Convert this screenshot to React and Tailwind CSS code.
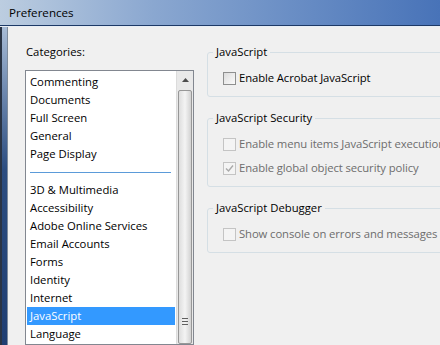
const categoriesTop = ['Commenting', 'Documents', 'Full Screen', 'General', 'Page Display']
const categoriesRest = [
  '3D & Multimedia',
  'Accessibility',
  'Adobe Online Services',
  'Email Accounts',
  'Forms',
  'Identity',
  'Internet',
  'JavaScript',
  'Language',
]

function CheckBox({ checked, disabled }) {
  return (
    <span
      className={
        'w-[13px] h-[13px] shrink-0 border flex items-center justify-center ' +
        (disabled
          ? 'border-[#c4c4c4] bg-[#f4f4f4]'
          : 'border-[#8e8f8f] bg-gradient-to-br from-[#dcdcdc] to-[#fbfbfb]')
      }
    >
      {checked && (
        <svg width="9" height="9" viewBox="0 0 9 9">
          <path d="M1 4.5 L3.5 7 L8 1.5" fill="none" stroke={disabled ? '#a9a9a9' : '#333'} strokeWidth="1.4" />
        </svg>
      )}
    </span>
  )
}

function Option({ label, checked, disabled }) {
  return (
    <div className="flex items-center gap-[3px] h-[16px] pl-[15px] whitespace-nowrap tracking-[-0.1px]">
      <CheckBox checked={checked} disabled={disabled} />
      <span className={disabled ? 'text-[#6d6d6d]' : 'text-black'}>{label}</span>
    </div>
  )
}

function Group({ title, children }) {
  return (
    <fieldset className="border border-[#d5dfe5] rounded-[3px] pb-[10px] flex flex-col gap-[8px]">
      <legend className="ml-[5px] px-[3px] leading-[16px] text-black">{title}</legend>
      <div className="flex flex-col gap-[8px] pt-[10px]">{children}</div>
    </fieldset>
  )
}

export default function App() {
  return (
    <div
      className="w-[440px] h-[345px] overflow-hidden flex flex-col bg-[#f0f0f0] text-[11.3px] leading-[16px]"
      style={{ fontFamily: '"Open Sans", "Noto Sans", sans-serif' }}
    >
      <div className="h-[26px] shrink-0 flex items-center pl-[9px] bg-gradient-to-r from-[#bccde0] via-[#8aa7d0] via-35% to-[#4873b8] border-b border-[#1d3966]">
        <span className="text-black text-[11.6px]">Preferences</span>
      </div>
      <div className="flex flex-1 min-h-0 border-t border-[#e8eef5]">
        <div className="w-[7px] shrink-0 bg-gradient-to-b from-[#a8bcd6] via-[#2c4d80] via-45% to-[#1f3e72] border-l-2 border-[#2a3444]" />
        <div className="w-px shrink-0 bg-[#7d8b9c]" />
        <div className="flex flex-1 min-w-0">
          <div className="w-[198px] shrink-0 pl-[17px] pt-[17px] flex flex-col">
            <div className="pl-[1px] text-black">Categories:</div>
            <div className="mt-[10px] w-[169px] flex-1 border border-[#828790] bg-white flex">
              <div className="flex-1 pt-[2px] pl-px pr-px flex flex-col overflow-hidden">
                {categoriesTop.map((c) => (
                  <div key={c} className="h-[18px] shrink-0 flex items-center pl-[3px] text-black whitespace-nowrap">
                    {c}
                  </div>
                ))}
                <div className="h-[18px] shrink-0 flex items-center px-[3px]">
                  <div className="h-px w-[141px] bg-[#5b9bd9]" />
                </div>
                {categoriesRest.map((c) => (
                  <div
                    key={c}
                    className={
                      'h-[18px] shrink-0 flex items-center pl-[3px] whitespace-nowrap ' +
                      (c === 'JavaScript' ? 'bg-[#3399ff] text-white' : 'text-black')
                    }
                  >
                    {c}
                  </div>
                ))}
              </div>
              <div className="w-[17px] shrink-0 bg-[#e9e9e9] border-l border-[#dcdcdc] flex flex-col">
                <div className="h-[18px] shrink-0 flex items-center justify-center">
                  <svg width="7" height="4" viewBox="0 0 7 4">
                    <path d="M0 4 L3.5 0 L7 4 Z" fill="#4d4d4d" />
                  </svg>
                </div>
                <div className="flex-1 mt-[1px] mx-[1px] rounded-[2px] border border-[#979797] bg-gradient-to-r from-[#dedede] via-[#f4f4f4] to-[#d2d2d2] flex flex-col items-center justify-end">
                  <div className="flex flex-col gap-[2px]">
                    <div className="h-px w-[6px] bg-[#606060]" />
                    <div className="h-px w-[6px] bg-[#606060]" />
                    <div className="h-px w-[6px] bg-[#606060]" />
                  </div>
                  <div className="h-[18px]" />
                </div>
              </div>
            </div>
          </div>
          <div className="pl-[1px] pt-[17px] w-[270px] shrink-0 flex flex-col gap-[13px]">
            <Group title="JavaScript">
              <Option label="Enable Acrobat JavaScript" />
            </Group>
            <Group title="JavaScript Security">
              <Option label="Enable menu items JavaScript execution privileges" disabled />
              <Option label="Enable global object security policy" checked disabled />
            </Group>
            <Group title="JavaScript Debugger">
              <Option label="Show console on errors and messages" disabled />
            </Group>
          </div>
        </div>
      </div>
    </div>
  )
}
